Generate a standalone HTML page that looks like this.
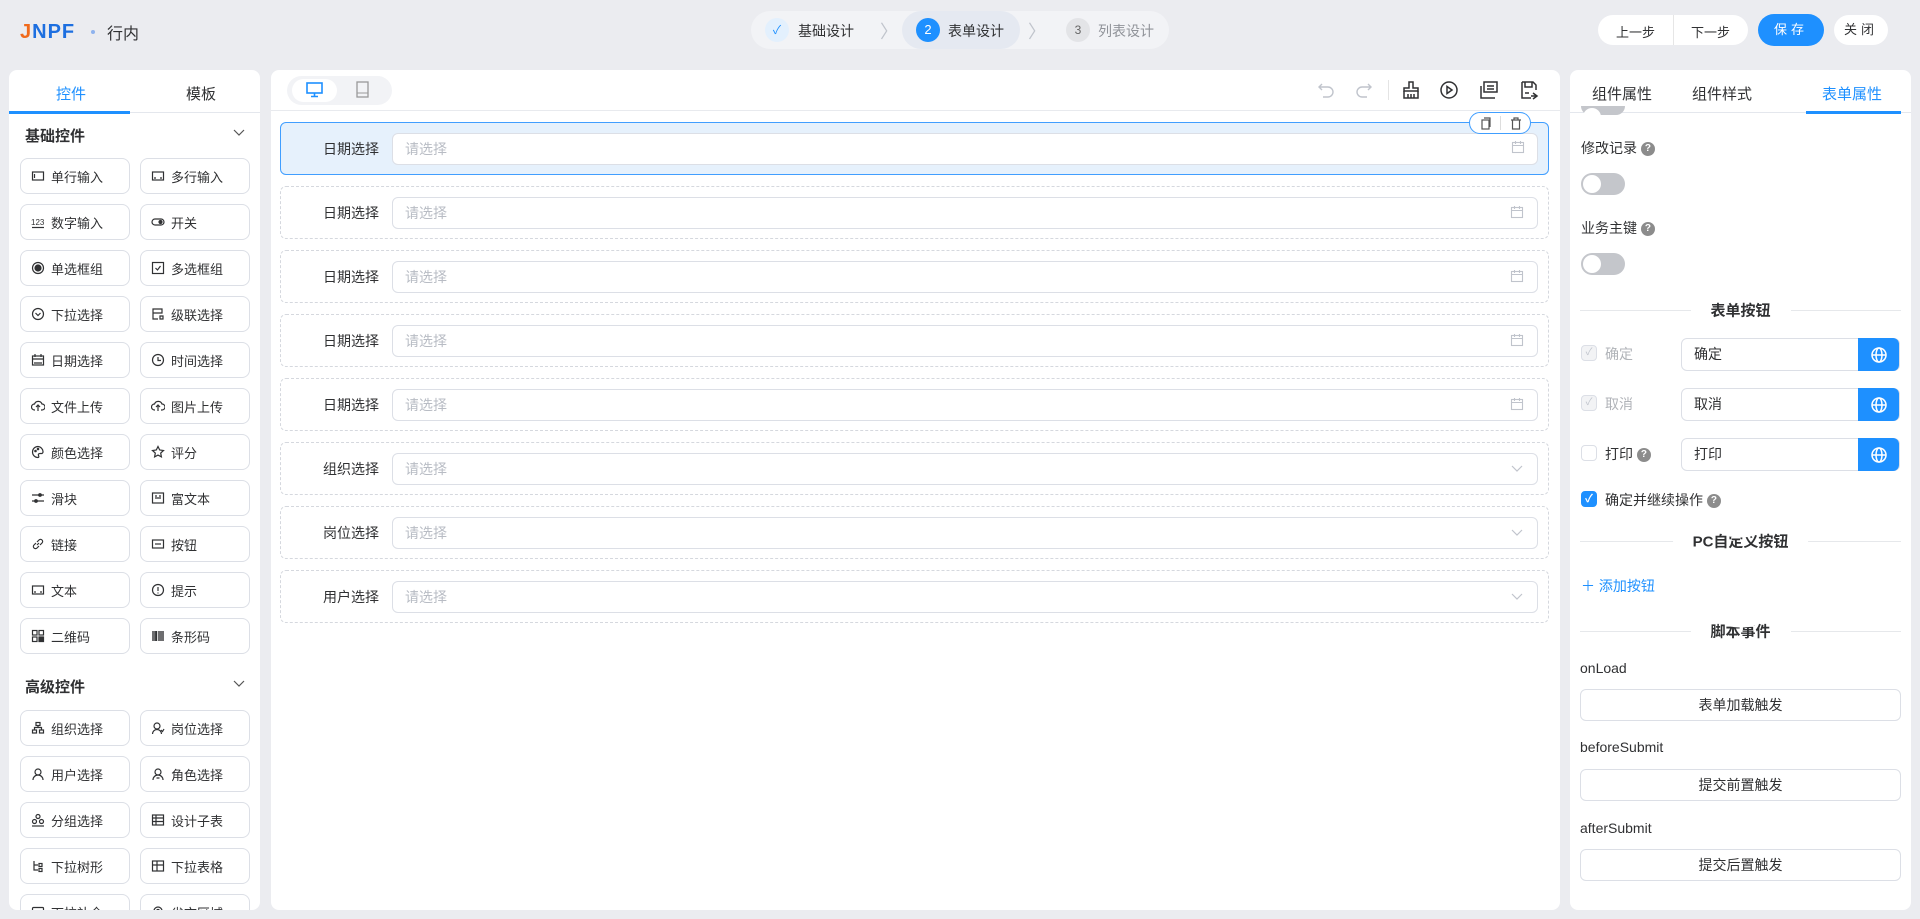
<!DOCTYPE html>
<html><head><meta charset="utf-8"><style>
*{box-sizing:border-box;margin:0;padding:0}
body{width:1920px;height:919px;background:#ebecf0;font-family:"Liberation Sans","Noto Sans CJK SC",sans-serif;font-size:14px;color:#303133;position:relative;overflow:hidden}
.abs{position:absolute}
.panel{position:absolute;background:#fff;border-radius:8px;top:70px;height:840px;overflow:hidden}
.btn{position:absolute;border:1px solid #dcdfe6;border-radius:8px;height:36px;width:110px;display:flex;align-items:center;padding-left:10px;font-size:13px;color:#303133;background:#fff}
.btn svg{width:14px;height:14px;margin-right:6px;flex:none}
.row{position:absolute;left:9px;width:1269px;height:53px;border:1px dashed #d5d8de;border-radius:6px}
.row .lb{position:absolute;right:1169px;top:16px;font-size:14px;width:120px;text-align:right}
.row .in{position:absolute;left:111px;right:10px;top:10px;height:32px;border:1px solid #dcdfe6;border-radius:6px;background:#fff;color:#b8bcc4;padding-left:12px;line-height:30px;font-size:14px}
.row .ic{position:absolute;right:10px;top:9px}
.tog{position:absolute;left:11px;width:44px;height:22px;border-radius:11px;background:#c4c6cb}
.tog:after{content:"";position:absolute;left:2px;top:2px;width:18px;height:18px;border-radius:50%;background:#fff}
.sep{position:absolute;left:10px;right:10px;height:1px;background:#e6e8eb}
.sep span{position:absolute;left:50%;transform:translate(-50%,-50%);background:#fff;padding:0 20px;font-weight:bold;font-size:15px;white-space:nowrap}
.q{display:inline-block;width:14px;height:14px;border-radius:50%;background:#8c8c8c;color:#fff;font-size:10px;line-height:14px;text-align:center;vertical-align:middle;font-weight:bold}
.ip{position:absolute;left:111px;width:219px;height:33px;border:1px solid #dcdfe6;border-radius:6px;padding-left:12px;line-height:31px}
.gb{position:absolute;right:0;top:-1px;width:41px;height:33px;background:#1e90ff;border-radius:0 6px 6px 0;display:flex;align-items:center;justify-content:center}
.cb{position:absolute;left:11px;width:16px;height:16px;border:1px solid #dcdfe6;border-radius:4px}
.ev{position:absolute;left:10px;right:10px;height:32px;border:1px solid #dcdfe6;border-radius:6px;text-align:center;line-height:30px}
</style></head><body>
<div class="abs" style="left:20px;top:21px;font-size:20px;letter-spacing:1px;color:#1d6fe0;font-family:'Liberation Sans',sans-serif;font-weight:bold"><span style="color:#f06a1c">J</span>NPF</div>
<div class="abs" style="left:91px;top:30px;width:4px;height:4px;border-radius:50%;background:#8fb3ee"></div>
<div class="abs" style="left:107px;top:20px;font-size:16px">行内</div>

<div class="abs" style="left:751px;top:11px;width:418px;height:38px;border-radius:19px;background:#f2f3f6"></div>
<div class="abs" style="left:902px;top:11px;width:118px;height:38px;border-radius:19px;background:#e5e9f1"></div>
<div class="abs" style="left:765px;top:18px;width:24px;height:24px;border-radius:50%;background:#e3f0fd;color:#1e90ff;text-align:center;line-height:24px;font-size:12px">✓</div>
<div class="abs" style="left:798px;top:21px;font-size:14px">基础设计</div>
<div class="abs" style="left:880px;top:18px;color:#c0c4cc;font-size:18px">〉</div>
<div class="abs" style="left:916px;top:18px;width:24px;height:24px;border-radius:50%;background:#1e90ff;color:#fff;text-align:center;line-height:24px;font-size:13px">2</div>
<div class="abs" style="left:948px;top:21px;font-size:14px">表单设计</div>
<div class="abs" style="left:1028px;top:18px;color:#c0c4cc;font-size:18px">〉</div>
<div class="abs" style="left:1066px;top:18px;width:24px;height:24px;border-radius:50%;background:#e3e4e7;color:#666;text-align:center;line-height:24px;font-size:12px">3</div>
<div class="abs" style="left:1098px;top:21px;font-size:14px;color:#909399">列表设计</div>

<div class="abs" style="left:1598px;top:15px;width:150px;height:30px;border-radius:15px;background:#fff"></div>
<div class="abs" style="left:1673px;top:15px;width:1px;height:30px;background:#e6e6e6"></div>
<div class="abs" style="left:1616px;top:22px;font-size:13px">上一步</div>
<div class="abs" style="left:1691px;top:22px;font-size:13px">下一步</div>
<div class="abs" style="left:1758px;top:14px;width:66px;height:32px;border-radius:16px;background:#1e90ff;color:#fff;text-align:center;line-height:32px;letter-spacing:4px;font-size:13px">保存</div>
<div class="abs" style="left:1834px;top:15px;width:54px;height:30px;border-radius:15px;background:#fff;text-align:center;line-height:30px;letter-spacing:4px;font-size:13px">关闭</div>

<div class="panel" style="left:9px;width:251px">
 <div class="abs" style="left:0;top:0;width:251px;height:43px;border-bottom:1px solid #e4e7ed"></div>
 <div class="abs" style="left:0;top:41px;width:121px;height:3px;background:#1e90ff"></div>
 <div class="abs" style="left:47px;top:13px;color:#1e90ff;font-size:15px">控件</div>
 <div class="abs" style="left:177px;top:13px;font-size:15px">模板</div>
 <div class="abs" style="left:16px;top:55px;font-weight:bold;font-size:15px">基础控件</div>
 <svg class="abs" style="left:224px;top:59px" width="12" height="8" viewBox="0 0 12 8" fill="none" stroke="#555" stroke-width="1.2"><path d="M1 1l5 5 5-5"/></svg>
 <div class="abs" style="left:16px;top:606px;font-weight:bold;font-size:15px">高级控件</div>
 <svg class="abs" style="left:224px;top:610px" width="12" height="8" viewBox="0 0 12 8" fill="none" stroke="#555" stroke-width="1.2"><path d="M1 1l5 5 5-5"/></svg>
</div>
<div id="lb" class="abs" style="left:0;top:0;width:265px;height:910px;overflow:hidden"></div>

<div class="panel" style="left:271px;width:1289px">
 <div class="abs" style="left:0;top:40px;width:1289px;height:1px;background:#e8eaee"></div>
 <div class="abs" style="left:16px;top:6px;width:105px;height:29px;border-radius:15px;background:#f2f3f6"></div>
 <div class="abs" style="left:21px;top:9px;width:45px;height:23px;border-radius:12px;background:#fff"></div>
 <svg class="abs" style="left:35px;top:12px" width="17" height="16" viewBox="0 0 17 16"><rect x="1" y="1" width="15" height="10" fill="none" stroke="#1e90ff" stroke-width="1.6"/><path d="M8.5 11v3M5 14.5h7" stroke="#1e90ff" stroke-width="1.6"/></svg>
 <svg class="abs" style="left:85px;top:11px" width="13" height="17" viewBox="0 0 13 17"><rect x="1" y="1" width="11" height="15" fill="none" stroke="#999" stroke-width="1.3"/><path d="M1 12h11" stroke="#999"/></svg>
 <svg class="abs" style="left:1046px;top:12px" width="18" height="16" viewBox="0 0 18 16" fill="none" stroke="#c0c4cc" stroke-width="1.4"><path d="M5 2L2 5l3 3M2 5h9a5 5 0 010 10H6"/></svg>
 <svg class="abs" style="left:1084px;top:12px" width="18" height="16" viewBox="0 0 18 16" fill="none" stroke="#c0c4cc" stroke-width="1.4"><path d="M13 2l3 3-3 3M16 5H7a5 5 0 000 10h5"/></svg>
 <div class="abs" style="left:1117px;top:10px;width:1px;height:20px;background:#e4e4e4"></div>
 <svg class="abs" style="left:1130px;top:10px" width="20" height="20" viewBox="0 0 20 20" fill="none" stroke="#303133" stroke-width="1.5"><path d="M8 2h4v6h5v3H3V8h5z"/><path d="M3 11v7h14v-7M7 14v4M10 14v4M13 14v4"/></svg>
 <svg class="abs" style="left:1168px;top:10px" width="20" height="20" viewBox="0 0 20 20" fill="none" stroke="#303133" stroke-width="1.5"><circle cx="10" cy="10" r="8"/><path d="M8 6.5v7l5-3.5z"/></svg>
 <svg class="abs" style="left:1208px;top:10px" width="20" height="20" viewBox="0 0 20 20" fill="none" stroke="#303133" stroke-width="1.5"><rect x="5" y="2" width="13" height="10"/><path d="M2 6v12h14M8 6h7M8 9h7"/></svg>
 <svg class="abs" style="left:1248px;top:10px" width="20" height="20" viewBox="0 0 20 20" fill="none" stroke="#303133" stroke-width="1.5"><path d="M3 2h11l3 3v5M3 2v16h9M6 2v5h7V2M6 13h4M14 13l4 3-4 3M12 16h6"/></svg>
</div>

<div class="row" style="left:280px;top:122px;border:1px solid #409eff;background:#e6f1fc"><div class="lb">日期选择</div><div class="in">请选择</div></div>
<div class="abs" style="left:1469px;top:112px;width:62px;height:22px;border:1px solid #409eff;border-radius:11px;background:#fff"></div>
<div class="abs" style="left:1500px;top:116px;width:1px;height:14px;background:#ddd"></div>
<svg class="abs" style="left:1480px;top:117px" width="12" height="13" viewBox="0 0 12 13" fill="none" stroke="#555" stroke-width="1.2"><rect x="2" y="3" width="7" height="9"/><path d="M4 1h6v9"/></svg>
<svg class="abs" style="left:1510px;top:117px" width="12" height="13" viewBox="0 0 12 13" fill="none" stroke="#555" stroke-width="1.2"><path d="M1 3h10M4 3V1h4v2M2.5 3v9h7V3"/></svg>
<div id="rows"></div>

<div class="panel" style="left:1570px;width:341px">
 <div class="abs" style="left:0;top:0;width:341px;height:43px;border-bottom:1px solid #e4e7ed"></div>
 <div class="abs" style="left:236px;top:41px;width:95px;height:3px;background:#1e90ff"></div>
 <div class="abs" style="left:22px;top:13px;font-size:15px">组件属性</div>
 <div class="abs" style="left:122px;top:13px;font-size:15px">组件样式</div>
 <div class="abs" style="left:252px;top:13px;font-size:15px;color:#1e90ff">表单属性</div>
 <div class="tog" style="top:36px;height:9px;border-radius:0 0 11px 11px"></div>
 <div class="abs" style="left:11px;top:68px">修改记录 <span class="q">?</span></div>
 <div class="tog" style="top:103px"></div>
 <div class="abs" style="left:11px;top:148px">业务主键 <span class="q">?</span></div>
 <div class="tog" style="top:183px"></div>
 <div class="sep" style="top:240px"><span>表单按钮</span></div>
 <div class="cb" style="top:275px;background:#f2f3f5;color:#c0c4cc;font-size:10px;text-align:center;line-height:14px">✓</div>
 <div class="abs" style="left:35px;top:274px;color:#b0b3b8">确定</div>
 <div class="ip" style="top:268px">确定<div class="gb"><svg width="18" height="18" viewBox="0 0 18 18" fill="none" stroke="#fff" stroke-width="1.5"><circle cx="9" cy="9" r="7"/><ellipse cx="9" cy="9" rx="3" ry="7"/><path d="M2 9h14"/></svg></div></div>
 <div class="cb" style="top:325px;background:#f2f3f5;color:#c0c4cc;font-size:10px;text-align:center;line-height:14px">✓</div>
 <div class="abs" style="left:35px;top:324px;color:#b0b3b8">取消</div>
 <div class="ip" style="top:318px">取消<div class="gb"><svg width="18" height="18" viewBox="0 0 18 18" fill="none" stroke="#fff" stroke-width="1.5"><circle cx="9" cy="9" r="7"/><ellipse cx="9" cy="9" rx="3" ry="7"/><path d="M2 9h14"/></svg></div></div>
 <div class="cb" style="top:375px"></div>
 <div class="abs" style="left:35px;top:374px">打印 <span class="q">?</span></div>
 <div class="ip" style="top:368px">打印<div class="gb"><svg width="18" height="18" viewBox="0 0 18 18" fill="none" stroke="#fff" stroke-width="1.5"><circle cx="9" cy="9" r="7"/><ellipse cx="9" cy="9" rx="3" ry="7"/><path d="M2 9h14"/></svg></div></div>
 <div class="cb" style="top:421px;background:#1e90ff;border-color:#1e90ff;color:#fff;font-size:11px;text-align:center;line-height:14px;font-weight:bold">✓</div>
 <div class="abs" style="left:35px;top:420px">确定并继续操作 <span class="q">?</span></div>
 <div class="sep" style="top:471px"><span>PC自定义按钮 <span class="q">?</span></span></div>
 <div class="abs" style="left:11px;top:506px;color:#1e90ff">＋ 添加按钮</div>
 <div class="sep" style="top:561px"><span>脚本事件 <span class="q">?</span></span></div>
 <div class="abs" style="left:10px;top:590px">onLoad</div>
 <div class="ev" style="top:619px">表单加载触发</div>
 <div class="abs" style="left:10px;top:669px">beforeSubmit</div>
 <div class="ev" style="top:699px">提交前置触发</div>
 <div class="abs" style="left:10px;top:750px">afterSubmit</div>
 <div class="ev" style="top:779px">提交后置触发</div>
</div>

<script>
var cal='<svg width="14" height="14" viewBox="0 0 14 14" fill="none" stroke="#c0c4cc" stroke-width="1.1"><rect x="1.5" y="2.5" width="11" height="10"/><path d="M1.5 5.5h11M4.5 1v3M9.5 1v3"/></svg>';
var dn='<svg width="14" height="14" viewBox="0 0 14 14" fill="none" stroke="#c0c4cc" stroke-width="1.2"><path d="M2 5l5 5 5-5"/></svg>';
var L=['日期选择','日期选择','日期选择','日期选择','组织选择','岗位选择','用户选择'];
var h='<div class="row" style="left:280px;top:122px;border:none;background:none"><div class="ic" style="right:24px;top:18px">'+cal+'</div></div>';
for(var i=0;i<7;i++){var t=186+i*64;h+='<div class="row" style="left:280px;top:'+t+'px"><div class="lb">'+L[i]+'</div><div class="in">请选择</div><div class="ic" style="right:24px;top:18px">'+(i<4?cal:dn)+'</div></div>';}
document.getElementById('rows').innerHTML=h;
function sv(p){return '<svg viewBox="0 0 14 14" fill="none" stroke="#303133" stroke-width="1.2">'+p+'</svg>';}
var I={
'单行输入':'<rect x="1.5" y="3" width="11" height="8"/><path d="M3.5 5v4"/>',
'多行输入':'<rect x="1.5" y="3" width="11" height="8"/><path d="M3 9h2M9 9h2"/>',
'数字输入':'<text x="0" y="10" font-size="8" fill="#303133" stroke="none" font-family="Liberation Sans">123</text><path d="M1 12.5h12"/>',
'开关':'<rect x="1" y="4" width="12" height="6" rx="3"/><circle cx="9.5" cy="7" r="1.5" fill="#303133"/>',
'单选框组':'<circle cx="7" cy="7" r="5.5"/><circle cx="7" cy="7" r="3" fill="#303133"/>',
'多选框组':'<rect x="1.5" y="1.5" width="11" height="11"/><path d="M4.5 7l2 2 3-4"/>',
'下拉选择':'<circle cx="7" cy="7" r="5.5"/><path d="M4.5 6l2.5 2.5L9.5 6"/>',
'级联选择':'<path d="M2 2h9v4H2zM2 6v6h5M9 9h3v3H9z"/>',
'日期选择':'<rect x="1.5" y="3" width="11" height="9"/><path d="M1.5 6h11M4 1v3M10 1v3M3 10h8"/>',
'时间选择':'<circle cx="7" cy="7" r="5.5"/><path d="M7 4v3.5h3"/>',
'文件上传':'<path d="M4 11H3.5a3 3 0 010-6 4 4 0 017.5 0 3 3 0 010 6H10M7 12V6M5 8l2-2 2 2"/>',
'图片上传':'<path d="M4 11H3.5a3 3 0 010-6 4 4 0 017.5 0 3 3 0 010 6H10M7 12V6M5 8l2-2 2 2"/>',
'颜色选择':'<path d="M7 1.5a5.5 5.5 0 100 11c1 0 1-1 .5-2s0-2 1.5-2h2a2 2 0 001-2A5.5 5.5 0 007 1.5z"/><circle cx="4.5" cy="6" r=".7" fill="#303133"/><circle cx="7" cy="4" r=".7" fill="#303133"/>',
'评分':'<path d="M7 1.5l1.7 3.5 3.8.5-2.8 2.6.7 3.8L7 10.1l-3.4 1.8.7-3.8L1.5 5.5l3.8-.5z"/>',
'滑块':'<path d="M1 4h12M1 10h12"/><circle cx="9" cy="4" r="1.3" fill="#303133"/><circle cx="5" cy="10" r="1.3" fill="#303133"/>',
'富文本':'<rect x="1.5" y="2" width="11" height="10"/><path d="M4 5h2M4 7h6M8 5h2"/>',
'链接':'<path d="M6 8l2-2M5 6L3 8a2 2 0 003 3l2-2M9 8l2-2a2 2 0 00-3-3L6 5"/>',
'按钮':'<rect x="1.5" y="3" width="11" height="8"/><path d="M4 7h6"/>',
'文本':'<rect x="1.5" y="3" width="11" height="8"/><path d="M3 9h2M9 9h2"/>',
'提示':'<circle cx="7" cy="7" r="5.5"/><path d="M7 4v4M7 9.5v1"/>',
'二维码':'<rect x="1.5" y="1.5" width="4.5" height="4.5"/><rect x="8" y="1.5" width="4.5" height="4.5"/><rect x="1.5" y="8" width="4.5" height="4.5"/><path d="M8 8h4.5v4.5H8z" fill="#303133"/>',
'条形码':'<path d="M2 2v10M4 2v10M5.5 2v10M8 2v10M10 2v10M12 2v10" stroke-width="1.4"/>'
};
var gen='<rect x="1.5" y="2.5" width="11" height="9" rx="1"/>';
var A2={'组织选择':'<rect x="5" y="1.5" width="4" height="3"/><rect x="1.5" y="9" width="4" height="3"/><rect x="8.5" y="9" width="4" height="3"/><path d="M7 4.5v2M3.5 9V6.5h7V9"/>','岗位选择':'<circle cx="6" cy="5" r="3"/><path d="M1.5 13a4.5 4.5 0 019 0M10 9l1.5 1.5L13 8"/>','用户选择':'<circle cx="7" cy="5" r="3"/><path d="M2 13a5 5 0 0110 0"/>','角色选择':'<circle cx="7" cy="5" r="3"/><path d="M2 13a5 5 0 0110 0M5.5 11h3"/>','分组选择':'<circle cx="7" cy="3.5" r="2"/><circle cx="3.5" cy="8.5" r="2"/><circle cx="10.5" cy="8.5" r="2"/><path d="M1 13h12"/>','设计子表':'<rect x="1.5" y="2" width="11" height="10"/><path d="M1.5 5h11M1.5 8.5h11M5 2v10"/>','下拉树形':'<path d="M3 2v9h4M3 6h4"/><rect x="8" y="4.5" width="3" height="3"/><rect x="8" y="9.5" width="3" height="3"/>','下拉表格':'<rect x="1.5" y="2" width="11" height="10"/><path d="M1.5 6h11M6 2v10"/>','下拉补全':gen,'省市区域':'<path d="M7 13s4-4 4-7a4 4 0 00-8 0c0 3 4 7 4 7z"/><circle cx="7" cy="6" r="1.5"/>'};
var B=[['单行输入','多行输入'],['数字输入','开关'],['单选框组','多选框组'],['下拉选择','级联选择'],['日期选择','时间选择'],['文件上传','图片上传'],['颜色选择','评分'],['滑块','富文本'],['链接','按钮'],['文本','提示'],['二维码','条形码']];
var A=[['组织选择','岗位选择'],['用户选择','角色选择'],['分组选择','设计子表'],['下拉树形','下拉表格'],['下拉补全','省市区域']];
var s='';
function put(arr,y0,M){for(var r=0;r<arr.length;r++)for(var c=0;c<2;c++){var y=y0+r*46;var n=arr[r][c];s+='<div class="btn" style="left:'+(20+c*120)+'px;top:'+y+'px">'+sv(M[n]||gen)+n+'</div>';}}
put(B,158,I);put(A,710,A2);
document.getElementById('lb').innerHTML=s;
</script>
</body></html>
